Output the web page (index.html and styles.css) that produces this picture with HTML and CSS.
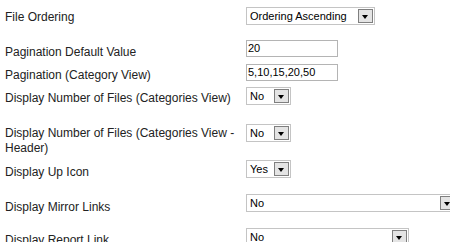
FILE: index.html
```html
<!DOCTYPE html>
<html lang="en">
<head>
  <meta charset="UTF-8">
  <title>Download Settings</title>
  <link rel="stylesheet" href="styles.css">
</head>
<body>
  <div class="settings">
    <div class="row row-1">
      <label class="key">File Ordering</label>
      <div class="field">
        <div class="select w-ordering"><span class="value">Ordering Ascending</span><span class="arrow"></span></div>
      </div>
    </div>
    <div class="row row-2">
      <label class="key">Pagination Default Value</label>
      <div class="field"><div class="text-input">20</div></div>
    </div>
    <div class="row row-3">
      <label class="key">Pagination (Category View)</label>
      <div class="field"><div class="text-input">5,10,15,20,50</div></div>
    </div>
    <div class="row row-4">
      <label class="key">Display Number of Files (Categories View)</label>
      <div class="field">
        <div class="select w-small"><span class="value">No</span><span class="arrow"></span></div>
      </div>
    </div>
    <div class="row row-5">
      <label class="key">Display Number of Files (Categories View - Header)</label>
      <div class="field">
        <div class="select w-small"><span class="value">No</span><span class="arrow"></span></div>
      </div>
    </div>
    <div class="row row-6">
      <label class="key">Display Up Icon</label>
      <div class="field">
        <div class="select w-small"><span class="value">Yes</span><span class="arrow"></span></div>
      </div>
    </div>
    <div class="row row-7">
      <label class="key">Display Mirror Links</label>
      <div class="field">
        <div class="select w-wide"><span class="value">No</span><span class="arrow"></span></div>
      </div>
    </div>
    <div class="row row-8">
      <label class="key">Display Report Link</label>
      <div class="field">
        <div class="select w-medium"><span class="value">No</span><span class="arrow"></span></div>
      </div>
    </div>
  </div>
</body>
</html>
```

FILE: styles.css
```css
body {
  margin: 0;
  background: #fff;
  color: #222;
  font-family: "Liberation Sans", Arial, sans-serif;
  font-size: 12px;
  overflow: hidden;
}

.settings {
  padding: 7px 0 0 5px;
  width: 600px;
}

.row {
  display: flex;
  align-items: flex-start;
}

.key {
  width: 236px;
  flex: none;
  line-height: 15px;
  padding-top: 4px;
  padding-right: 5px;
}

.field {
  flex: none;
}

/* row spacing follows the original form */
.row-1 { height: 33px; }
.row-1 .key { padding-top: 3px; }
.row-2 { height: 24px; }
.row-2 .key { padding-top: 5px; }
.row-3 { height: 23px; }
.row-4 { height: 37px; }
.row-5 { height: 36px; }
.row-5 .key { padding-top: 2px; }
.row-6 { height: 34px; }
.row-6 .key { padding-top: 5px; }
.row-7 { height: 34px; }
.row-7 .key { padding-top: 6px; }
.row-8 .key { padding-top: 5px; }

/* inputs */
.text-input {
  width: 89px;
  height: 15px;
  border: 1px solid #b4b4b4;
  font-size: 11px;
  line-height: 15px;
  padding-left: 1px;
  color: #000;
}

/* fake selects */
.select {
  display: flex;
  align-items: center;
  height: 14px;
  border: 1px solid #c4c4c4;
  font-size: 11px;
  color: #000;
  padding: 1px 1px 1px 3px;
}

.select .value {
  flex: 1;
  line-height: 14px;
  white-space: nowrap;
}

.select .arrow {
  position: relative;
  width: 13px;
  height: 12px;
  border: 1px solid #7f7f7f;
  background: #e4e4e4;
  flex: none;
}

.select .arrow::after {
  content: '';
  position: absolute;
  left: 3px;
  top: 5px;
  border-left: 3.5px solid transparent;
  border-right: 3.5px solid transparent;
  border-top: 4px solid #000;
}

.w-ordering { width: 123px; }
.w-small { width: 39px; }
.w-wide { width: 205px; }
.w-medium { width: 157px; }
```
